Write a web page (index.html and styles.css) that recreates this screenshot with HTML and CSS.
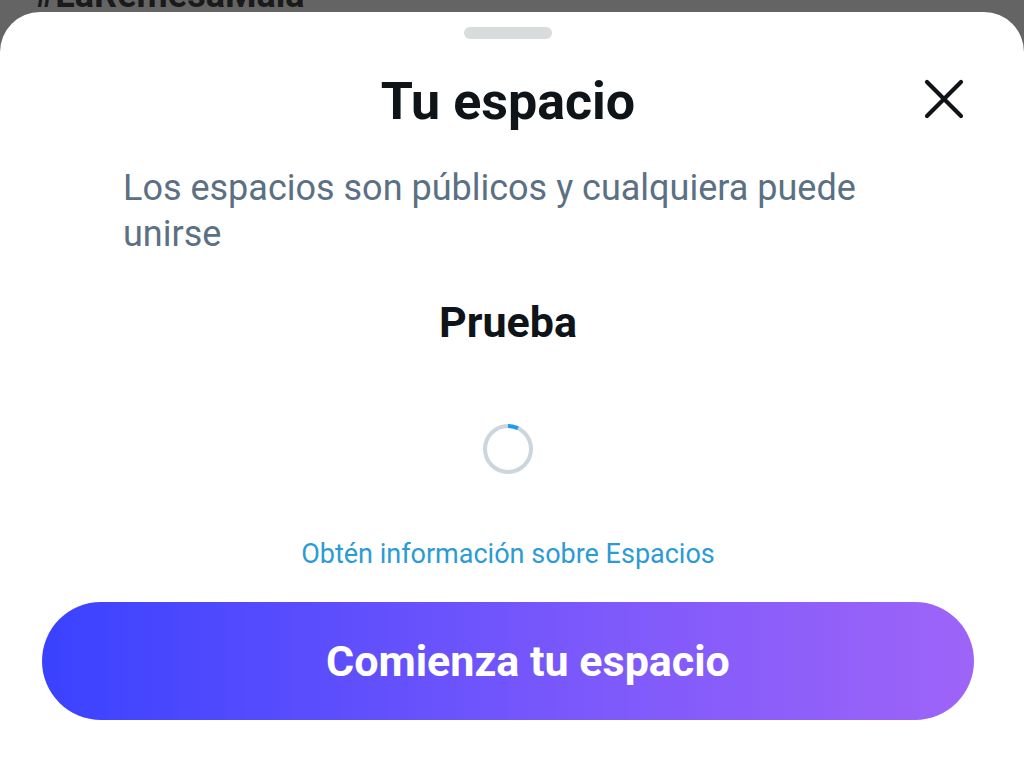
FILE: index.html
```html
<!DOCTYPE html>
<html lang="es">
<head>
    <meta charset="UTF-8">
    <meta name="viewport" content="width=device-width, initial-scale=1.0">
    <title>Tu espacio</title>
    <link rel="stylesheet" href="styles.css">
</head>
<body>
    <div class="backdrop">
        <span class="hashtag">#LaRemesaMala</span>
    </div>

    <div class="sheet">
        <div class="handle"></div>

        <div class="sheet-header">
            <h2 class="title">Tu espacio</h2>
            <button class="close" aria-label="Cerrar">
                <svg width="40" height="40" viewBox="0 0 40 40">
                    <path d="M3 3 L37 37 M37 3 L3 37" stroke="#0f1419" stroke-width="4.2" stroke-linecap="round"/>
                </svg>
            </button>
        </div>

        <p class="description">Los espacios son públicos y cualquiera puede unirse</p>

        <div class="space-name">Prueba</div>

        <div class="spinner">
            <svg width="52" height="52" viewBox="0 0 52 52">
                <circle cx="26" cy="26" r="23" fill="none" stroke="#ccd6dd" stroke-width="4"/>
                <path d="M26 3 A23 23 0 0 1 36 5.3" fill="none" stroke="#1d9bf0" stroke-width="4"/>
            </svg>
        </div>

        <a class="learn-more" href="#">Obtén información sobre Espacios</a>

        <button class="start">Comienza tu espacio</button>
    </div>
</body>
</html>
```

FILE: styles.css
```css
html, body {
    margin: 0;
    height: 100%;
}
body {
    font-family: Roboto, "Noto Sans", Arial, sans-serif;
    background-color: #646464;
    overflow: hidden;
}
.backdrop {
    height: 12px;
    position: relative;
    overflow: hidden;
}
.hashtag {
    position: absolute;
    left: 34px;
    bottom: 4px;
    font-size: 36px;
    font-weight: 700;
    line-height: 26px;
    color: #1a1a1a;
}
.sheet {
    background-color: white;
    border-radius: 40px 40px 0 0;
    height: calc(100% - 12px);
    padding-right: 8px;
    display: flex;
    flex-direction: column;
    align-items: center;
}
.handle {
    width: 88px;
    height: 12px;
    border-radius: 6px;
    background-color: #d9dcdc;
    margin-top: 15px;
}
.sheet-header {
    width: 100%;
    position: relative;
    display: flex;
    justify-content: center;
    margin-top: 32px;
}
.title {
    margin: 0;
    font-size: 52px;
    font-weight: 700;
    line-height: 61px;
    color: #0f1419;
}
.close {
    position: absolute;
    right: 52px;
    top: 8px;
    border: none;
    background: none;
    padding: 0;
    cursor: pointer;
}
.description {
    align-self: stretch;
    margin: 33px 110px 0 123px;
    font-size: 36px;
    line-height: 46px;
    color: #5b7083;
}
.space-name {
    margin-top: 40px;
    font-size: 43px;
    font-weight: 700;
    color: #0f1419;
}
.spinner {
    margin-top: 76px;
    height: 52px;
}
.learn-more {
    margin-top: 63px;
    font-size: 27px;
    color: #2b9bd6;
    text-decoration: none;
}
.start {
    margin-top: 32px;
    width: 932px;
    height: 118px;
    padding: 0 0 0 40px;
    border: none;
    border-radius: 59px;
    background: linear-gradient(to right, #3a42ff, #7d59fb 60%, #9e64f8);
    color: white;
    font-family: inherit;
    font-size: 43px;
    font-weight: 700;
    cursor: pointer;
}
```
